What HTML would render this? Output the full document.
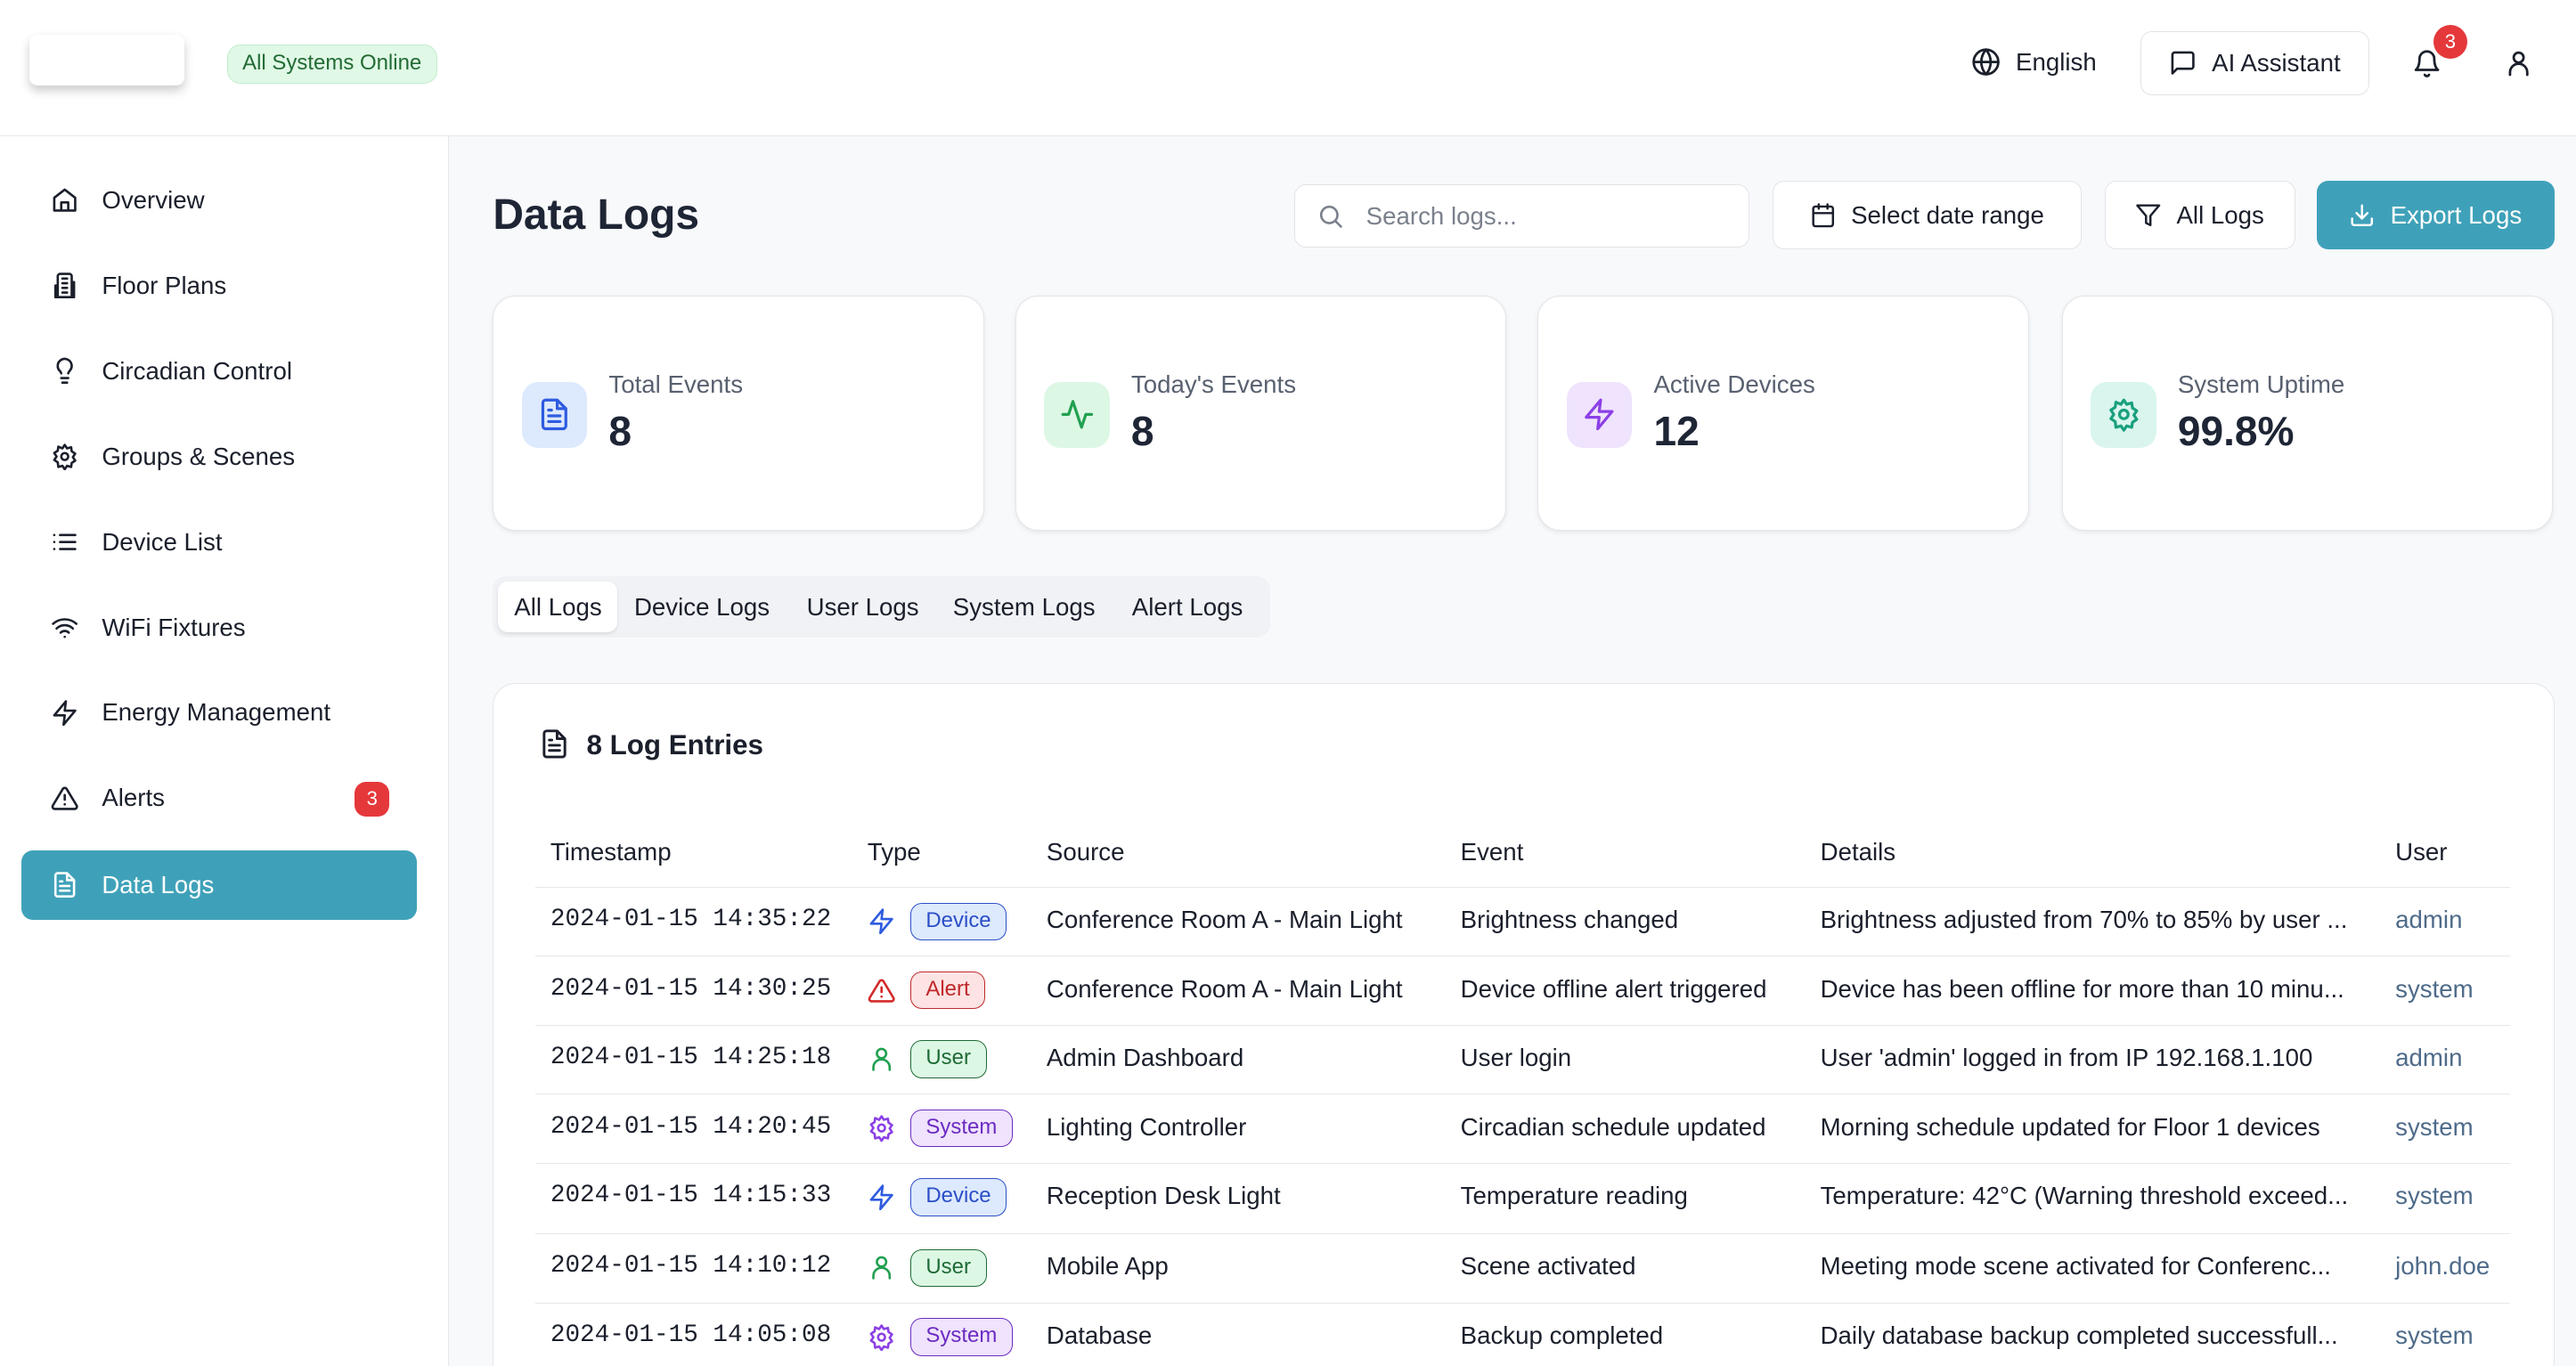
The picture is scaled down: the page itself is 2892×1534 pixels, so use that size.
<!DOCTYPE html>
<html><head><meta charset="utf-8"><style>
*{box-sizing:border-box;margin:0;padding:0}
html,body{width:2892px;height:1534px;overflow:hidden;background:#fff}
#w{zoom:1.8444;width:1568px;height:832px;position:relative;font-family:"Liberation Sans",sans-serif;color:#1a1f2b;font-size:15px}
.a{position:absolute}
svg{fill:none;stroke:currentColor;stroke-width:2;stroke-linecap:round;stroke-linejoin:round}
.hdr{left:0;top:0;width:1568px;height:83px;border-bottom:1px solid #e5e7eb;background:#fff}
.side{left:0;top:83px;width:273px;height:749px;border-right:1px solid #e5e7eb;background:#fff}
.main{left:273px;top:83px;width:1295px;height:749px;background:#f8f9fb}
.nav{position:absolute;left:13px;width:241px;height:42px;display:flex;align-items:center;padding-left:18px;gap:14px;font-size:15px}
.nav svg{width:17px;height:17px}
.btn{position:absolute;top:110px;height:42px;border:1px solid #e2e4e8;border-radius:7px;background:#fff;display:flex;align-items:center;justify-content:center;gap:9px;font-size:15px}
.btn svg{width:16px;height:16px}
.card{position:absolute;top:180px;width:299px;height:143px;background:#fff;border:1px solid #e3e5e9;border-radius:14px;box-shadow:0 1px 3px rgba(0,0,0,.08)}
.ic{position:absolute;left:17px;top:52px;width:40px;height:40px;border-radius:10px;display:flex;align-items:center;justify-content:center}
.ic svg{width:21px;height:21px}
.cl{position:absolute;left:70px;top:45px;color:#596170;font-size:15px}
.cv{position:absolute;left:70px;top:67px;font-size:25px;font-weight:bold;color:#1e2535}
.row{position:absolute;left:326px;width:1202px;height:42px;border-top:1px solid #e5e7eb;font-size:15px}
.row>div{position:absolute;top:11px}
.ts{left:9px;font-family:"Liberation Mono",monospace;font-size:15px}
.ti{position:absolute;left:202px;top:12px;width:17px;height:17px}
.row>.bd{left:228px;top:9px;height:23px;border-radius:7px;padding:0 9px;font-size:13px;line-height:21px;border:1px solid}
.dev{background:#dde9fd;color:#2b4fc7;border-color:#bcd2fb}
.alr{background:#fde3e3;color:#c0282a;border-color:#f8c5c5}
.usr{background:#ddf7e5;color:#1f6b35;border-color:#bfeccd}
.sys{background:#efe3fd;color:#6c2bc1;border-color:#ddc8fb}
.c3{left:311px}.c4{left:563px}.c5{left:782px}.c6{left:1132px;color:#4e6b8a}
</style></head><body><div id="w">
<div class="a hdr">
 <div class="a" style="left:18px;top:21px;width:94px;height:31px;background:#fff;border-radius:5px;box-shadow:0 3px 6px rgba(0,0,0,.2)"></div>
 <div class="a" style="left:138px;top:27px;height:24px;padding:0 9px;background:#e0f8e6;border:1px solid #c1edcd;border-radius:8px;color:#226b34;font-size:13px;line-height:22px">All Systems Online</div>
 <div class="a" style="left:1200px;top:29px;display:flex;gap:9px;align-items:center;font-size:15px"><svg style="width:18px;height:18px" viewBox="0 0 24 24"><circle cx="12" cy="12" r="10"/><path d="M2 12h20M12 2a15 15 0 0 1 0 20M12 2a15 15 0 0 0 0 20"/></svg>English</div>
 <div class="a" style="left:1303px;top:19px;width:139px;height:39px;border:1px solid #e2e4e8;border-radius:7px;display:flex;align-items:center;justify-content:center;gap:9px"><svg style="width:17px;height:17px" viewBox="0 0 24 24"><path d="M21 15a2 2 0 0 1-2 2H7l-4 4V5a2 2 0 0 1 2-2h14a2 2 0 0 1 2 2z"/></svg>AI Assistant</div>
 <svg class="a" style="left:1468px;top:30px;width:18px;height:18px" viewBox="0 0 24 24"><path d="M6 8a6 6 0 0 1 12 0c0 7 3 9 3 9H3s3-2 3-9M10.3 21a1.9 1.9 0 0 0 3.4 0"/></svg>
 <div class="a" style="left:1481px;top:15px;width:21px;height:21px;border-radius:50%;background:#e5383b;color:#fff;font-size:12px;text-align:center;line-height:21px">3</div>
 <svg class="a" style="left:1524px;top:30px;width:18px;height:18px" viewBox="0 0 24 24"><circle cx="12" cy="7" r="4"/><path d="M5 21v-2a7 7 0 0 1 14 0v2"/></svg>
</div>
<div class="a side"></div>
<div class="nav" style="top:101px"><svg viewBox="0 0 24 24"><path d="M3 10l9-7 9 7v11H3zM9 21v-7h6v7"/></svg>Overview</div>
<div class="nav" style="top:153px"><svg viewBox="0 0 24 24"><path d="M6 22V4a2 2 0 0 1 2-2h8a2 2 0 0 1 2 2v18zM6 12H4v10h16V9h-2M10 6h4M10 10h4M10 14h4M10 18h4"/></svg>Floor Plans</div>
<div class="nav" style="top:205px"><svg viewBox="0 0 24 24"><path d="M9 18h6M10 22h4M15 14c.2-1 .7-1.7 1.5-2.5A6 6 0 1 0 6 8c0 1 .2 2.2 1.5 3.5.7.7 1.3 1.5 1.5 2.5"/></svg>Circadian Control</div>
<div class="nav" style="top:257px"><svg viewBox="0 0 24 24"><circle cx="12" cy="12" r="3"/><path d="M12 2l2 3 3.5-1 .5 3.5 3 2-2 3 2 3-3 2-.5 3.5-3.5-1-2 3-2-3-3.5 1L6 17l-3-2 2-3-2-3 3-2 .5-3.5L10 5z"/></svg>Groups &amp; Scenes</div>
<div class="nav" style="top:309px"><svg viewBox="0 0 24 24"><path d="M8 6h13M8 12h13M8 18h13M3 6h.01M3 12h.01M3 18h.01"/></svg>Device List</div>
<div class="nav" style="top:361px"><svg viewBox="0 0 24 24"><path d="M2 8.8a15 15 0 0 1 20 0M5 12.9a10 10 0 0 1 14 0M8.5 16.4a5 5 0 0 1 7 0M12 20h.01"/></svg>WiFi Fixtures</div>
<div class="nav" style="top:413px"><svg viewBox="0 0 24 24"><path d="M13 2L3 14h9l-1 8 10-12h-9z"/></svg>Energy Management</div>
<div class="nav" style="top:465px"><svg viewBox="0 0 24 24"><path d="M10.3 3.9L1.8 18a2 2 0 0 0 1.7 3h17a2 2 0 0 0 1.7-3L13.7 3.9a2 2 0 0 0-3.4 0zM12 9v4M12 17h.01"/></svg>Alerts</div>
<div class="a" style="left:216px;top:476px;width:21px;height:21px;border-radius:7px;background:#e5383b;color:#fff;font-size:12px;text-align:center;line-height:21px">3</div>
<div class="nav" style="top:518px;background:#3fa1b9;color:#fff;border-radius:7px"><svg viewBox="0 0 24 24"><path d="M14 2H6a2 2 0 0 0-2 2v16a2 2 0 0 0 2 2h12a2 2 0 0 0 2-2V8zM14 2v6h6M16 13H8M16 17H8M10 9H8"/></svg>Data Logs</div>
<div class="a main"></div>
<div class="a" style="left:300px;top:116px;font-size:26px;font-weight:bold;color:#1e2535">Data Logs</div>
<div class="a" style="left:788px;top:112px;width:277px;height:39px;border:1px solid #e2e4e8;border-radius:7px;background:#fff;display:flex;align-items:center;padding-left:13px;gap:13px;color:#7b818c"><svg style="width:17px;height:17px" viewBox="0 0 24 24"><circle cx="11" cy="11" r="7"/><path d="M21 21l-4.3-4.3"/></svg>Search logs...</div>
<div class="btn" style="left:1079px;width:188px"><svg viewBox="0 0 24 24"><rect x="3" y="4" width="18" height="18" rx="2"/><path d="M16 2v4M8 2v4M3 10h18"/></svg>Select date range</div>
<div class="btn" style="left:1281px;width:116px"><svg viewBox="0 0 24 24"><path d="M22 3H2l8 9.5V19l4 2v-8.5z"/></svg>All Logs</div>
<div class="btn" style="left:1410px;width:145px;background:#3fa1b9;color:#fff;border-color:#3fa1b9"><svg viewBox="0 0 24 24"><path d="M21 15v4a2 2 0 0 1-2 2H5a2 2 0 0 1-2-2v-4M7 10l5 5 5-5M12 15V3"/></svg>Export Logs</div>
<div class="card" style="left:300px"><div class="ic" style="background:#dde9fd;color:#2e5be0"><svg viewBox="0 0 24 24"><path d="M14 2H6a2 2 0 0 0-2 2v16a2 2 0 0 0 2 2h12a2 2 0 0 0 2-2V8zM14 2v6h6M16 13H8M16 17H8M10 9H8"/></svg></div><div class="cl">Total Events</div><div class="cv">8</div></div>
<div class="card" style="left:618px"><div class="ic" style="background:#ddf7e5;color:#22a050"><svg viewBox="0 0 24 24"><path d="M22 12h-4l-3 9L9 3l-3 9H2"/></svg></div><div class="cl">Today's Events</div><div class="cv">8</div></div>
<div class="card" style="left:936px"><div class="ic" style="background:#efe3fd;color:#8b3fe6"><svg viewBox="0 0 24 24"><path d="M13 2L3 14h9l-1 8 10-12h-9z"/></svg></div><div class="cl">Active Devices</div><div class="cv">12</div></div>
<div class="card" style="left:1255px"><div class="ic" style="background:#d9f5ee;color:#19a07d"><svg viewBox="0 0 24 24"><circle cx="12" cy="12" r="3"/><path d="M12 2l2 3 3.5-1 .5 3.5 3 2-2 3 2 3-3 2-.5 3.5-3.5-1-2 3-2-3-3.5 1L6 17l-3-2 2-3-2-3 3-2 .5-3.5L10 5z"/></svg></div><div class="cl">System Uptime</div><div class="cv">99.8%</div></div>
<div class="a" style="left:300px;top:351px;width:473px;height:37px;background:#f0f2f5;border-radius:8px"></div>
<div class="a" style="left:303px;top:354px;width:73px;height:31px;background:#fff;border-radius:6px;box-shadow:0 1px 2px rgba(0,0,0,.1)"></div>
<div class="a" style="left:313px;top:361px">All Logs</div>
<div class="a" style="left:386px;top:361px">Device Logs</div>
<div class="a" style="left:491px;top:361px">User Logs</div>
<div class="a" style="left:580px;top:361px">System Logs</div>
<div class="a" style="left:689px;top:361px">Alert Logs</div>
<div class="a" style="left:300px;top:416px;width:1255px;height:430px;background:#fff;border:1px solid #e3e5e9;border-radius:14px"></div>
<svg class="a" style="left:328px;top:443px;width:19px;height:20px" viewBox="0 0 24 24"><path d="M14 2H6a2 2 0 0 0-2 2v16a2 2 0 0 0 2 2h12a2 2 0 0 0 2-2V8zM14 2v6h6M16 13H8M16 17H8M10 9H8"/></svg>
<div class="a" style="left:357px;top:444px;font-size:17px;font-weight:bold">8 Log Entries</div>
<div class="a" style="left:335px;top:510px">Timestamp</div><div class="a" style="left:528px;top:510px">Type</div><div class="a" style="left:637px;top:510px">Source</div><div class="a" style="left:889px;top:510px">Event</div><div class="a" style="left:1108px;top:510px">Details</div><div class="a" style="left:1458px;top:510px">User</div>
<div class="row" style="top:540px"><div class="ts">2024-01-15 14:35:22</div><svg class="ti" style="color:#2e5be0" viewBox="0 0 24 24"><path d="M13 2L3 14h9l-1 8 10-12h-9z"/></svg><div class="bd dev">Device</div><div class="c3">Conference Room A - Main Light</div><div class="c4">Brightness changed</div><div class="c5">Brightness adjusted from 70% to 85% by user ...</div><div class="c6">admin</div></div>
<div class="row" style="top:582px"><div class="ts">2024-01-15 14:30:25</div><svg class="ti" style="color:#d42a2a" viewBox="0 0 24 24"><path d="M10.3 3.9L1.8 18a2 2 0 0 0 1.7 3h17a2 2 0 0 0 1.7-3L13.7 3.9a2 2 0 0 0-3.4 0zM12 9v4M12 17h.01"/></svg><div class="bd alr">Alert</div><div class="c3">Conference Room A - Main Light</div><div class="c4">Device offline alert triggered</div><div class="c5">Device has been offline for more than 10 minu...</div><div class="c6">system</div></div>
<div class="row" style="top:624px"><div class="ts">2024-01-15 14:25:18</div><svg class="ti" style="color:#22a050" viewBox="0 0 24 24"><circle cx="12" cy="7" r="4"/><path d="M5 21v-2a7 7 0 0 1 14 0v2"/></svg><div class="bd usr">User</div><div class="c3">Admin Dashboard</div><div class="c4">User login</div><div class="c5">User 'admin' logged in from IP 192.168.1.100</div><div class="c6">admin</div></div>
<div class="row" style="top:666px"><div class="ts">2024-01-15 14:20:45</div><svg class="ti" style="color:#8b3fe6" viewBox="0 0 24 24"><circle cx="12" cy="12" r="3"/><path d="M12 2l2 3 3.5-1 .5 3.5 3 2-2 3 2 3-3 2-.5 3.5-3.5-1-2 3-2-3-3.5 1L6 17l-3-2 2-3-2-3 3-2 .5-3.5L10 5z"/></svg><div class="bd sys">System</div><div class="c3">Lighting Controller</div><div class="c4">Circadian schedule updated</div><div class="c5">Morning schedule updated for Floor 1 devices</div><div class="c6">system</div></div>
<div class="row" style="top:708px"><div class="ts">2024-01-15 14:15:33</div><svg class="ti" style="color:#2e5be0" viewBox="0 0 24 24"><path d="M13 2L3 14h9l-1 8 10-12h-9z"/></svg><div class="bd dev">Device</div><div class="c3">Reception Desk Light</div><div class="c4">Temperature reading</div><div class="c5">Temperature: 42°C (Warning threshold exceed...</div><div class="c6">system</div></div>
<div class="row" style="top:751px"><div class="ts">2024-01-15 14:10:12</div><svg class="ti" style="color:#22a050" viewBox="0 0 24 24"><circle cx="12" cy="7" r="4"/><path d="M5 21v-2a7 7 0 0 1 14 0v2"/></svg><div class="bd usr">User</div><div class="c3">Mobile App</div><div class="c4">Scene activated</div><div class="c5">Meeting mode scene activated for Conferenc...</div><div class="c6">john.doe</div></div>
<div class="row" style="top:793px"><div class="ts">2024-01-15 14:05:08</div><svg class="ti" style="color:#8b3fe6" viewBox="0 0 24 24"><circle cx="12" cy="12" r="3"/><path d="M12 2l2 3 3.5-1 .5 3.5 3 2-2 3 2 3-3 2-.5 3.5-3.5-1-2 3-2-3-3.5 1L6 17l-3-2 2-3-2-3 3-2 .5-3.5L10 5z"/></svg><div class="bd sys">System</div><div class="c3">Database</div><div class="c4">Backup completed</div><div class="c5">Daily database backup completed successfull...</div><div class="c6">system</div></div>
</div></body></html>
